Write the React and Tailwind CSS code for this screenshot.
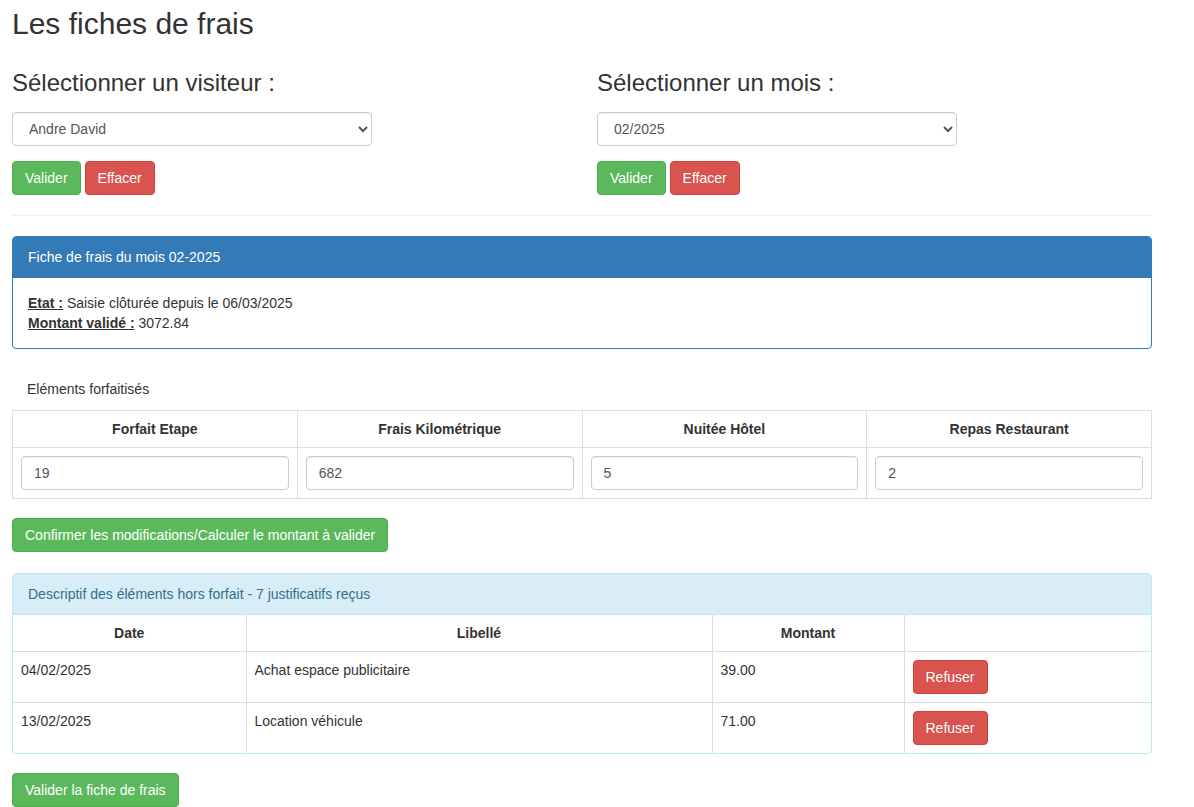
import React from 'react';

const font = { fontFamily: '"Liberation Sans", Arial, sans-serif' };

const Btn = ({ variant = 'success', children, className = '' }) => {
  const colors =
    variant === 'success'
      ? 'bg-[#5cb85c] border-[#4cae4c]'
      : 'bg-[#d9534f] border-[#d43f3a]';
  return (
    <button
      className={`${colors} border text-white text-[14px] leading-[20px] px-[12px] py-[6px] rounded-[4px] ${className}`}
    >
      {children}
    </button>
  );
};

const Picker = ({ title, value }) => (
  <div className="w-[585px] px-[15px]">
    <h3 className="text-[24px] leading-[26.4px] text-[#333] mt-[63px] mb-[16px]">{title}</h3>
    <select
      defaultValue={value}
      className="w-[360px] h-[34px] border border-[#ccc] rounded-[4px] px-[12px] text-[14px] text-[#555] bg-white shadow-[inset_0_1px_1px_rgba(0,0,0,0.075)]"
    >
      <option>{value}</option>
    </select>
    <div className="flex gap-[4px] mt-[15px]">
      <Btn>Valider</Btn>
      <Btn variant="danger">Effacer</Btn>
    </div>
  </div>
);

const forfaits = [
  ['Forfait Etape', '19'],
  ['Frais Kilométrique', '682'],
  ['Nuitée Hôtel', '5'],
  ['Repas Restaurant', '2'],
];

const horsForfait = [
  ['04/02/2025', 'Achat espace publicitaire', '39.00'],
  ['13/02/2025', 'Location véhicule', '71.00'],
];

export default function App() {
  return (
    <div style={font} className="bg-white text-[#333] text-[14px] leading-[20px] min-h-[807px] px-[12px]">
      <div className="w-[1140px]">
        <h2 className="text-[30px] leading-[33px] pt-[7px] h-0">Les fiches de frais</h2>
        <div className="flex -mx-[15px]">
          <Picker title="Sélectionner un visiteur :" value="Andre David" />
          <Picker title="Sélectionner un mois :" value="02/2025" />
        </div>
        <hr className="border-0 border-t border-[#eee] mt-[20px] mb-[20px]" />

        <div className="border border-[#337ab7] rounded-[4px]">
          <div className="bg-[#337ab7] text-white px-[15px] py-[10px] border-b border-[#337ab7] rounded-t-[3px]">
            Fiche de frais du mois 02-2025
          </div>
          <div className="p-[15px]">
            <div>
              <span className="font-bold underline">Etat :</span> Saisie clôturée depuis le 06/03/2025
            </div>
            <div>
              <span className="font-bold underline">Montant validé :</span> 3072.84
            </div>
          </div>
        </div>

        <div className="px-[15px] pt-[30px] pb-[11px]">Eléments forfaitisés</div>
        <table className="w-full border-collapse table-fixed">
          <thead>
            <tr>
              {forfaits.map(([h]) => (
                <th key={h} className="border border-[#ddd] p-[8px] font-bold text-center">
                  {h}
                </th>
              ))}
            </tr>
          </thead>
          <tbody>
            <tr>
              {forfaits.map(([h, v]) => (
                <td key={h} className="border border-[#ddd] p-[8px]">
                  <input
                    defaultValue={v}
                    className="w-full h-[34px] border border-[#ccc] rounded-[4px] px-[12px] text-[14px] text-[#555] shadow-[inset_0_1px_1px_rgba(0,0,0,0.075)]"
                  />
                </td>
              ))}
            </tr>
          </tbody>
        </table>

        <Btn className="mt-[19px]">Confirmer les modifications/Calculer le montant à valider</Btn>

        <div className="border border-[#bce8f1] rounded-[4px] mt-[21px] overflow-hidden">
          <div className="bg-[#d9edf7] text-[#31708f] px-[15px] py-[10px] border-b border-[#bce8f1]">
            Descriptif des éléments hors forfait - 7 justificatifs reçus
          </div>
          <table className="w-full border-collapse table-fixed">
            <colgroup>
              <col className="w-[233px]" />
              <col className="w-[466px]" />
              <col className="w-[192px]" />
              <col />
            </colgroup>
            <thead>
              <tr>
                <th className="border-r border-[#ddd] p-[8px] text-center">Date</th>
                <th className="border-r border-[#ddd] p-[8px] text-center">Libellé</th>
                <th className="border-r border-[#ddd] p-[8px] text-center">Montant</th>
                <th className="p-[8px]"></th>
              </tr>
            </thead>
            <tbody>
              {horsForfait.map(([d, l, m]) => (
                <tr key={d}>
                  <td className="border-t border-r border-[#ddd] p-[8px] align-top">{d}</td>
                  <td className="border-t border-r border-[#ddd] p-[8px] align-top">{l}</td>
                  <td className="border-t border-r border-[#ddd] p-[8px] align-top">{m}</td>
                  <td className="border-t border-[#ddd] p-[8px] align-top">
                    <Btn variant="danger">Refuser</Btn>
                  </td>
                </tr>
              ))}
            </tbody>
          </table>
        </div>

        <Btn className="mt-[19px]">Valider la fiche de frais</Btn>
      </div>
    </div>
  );
}
